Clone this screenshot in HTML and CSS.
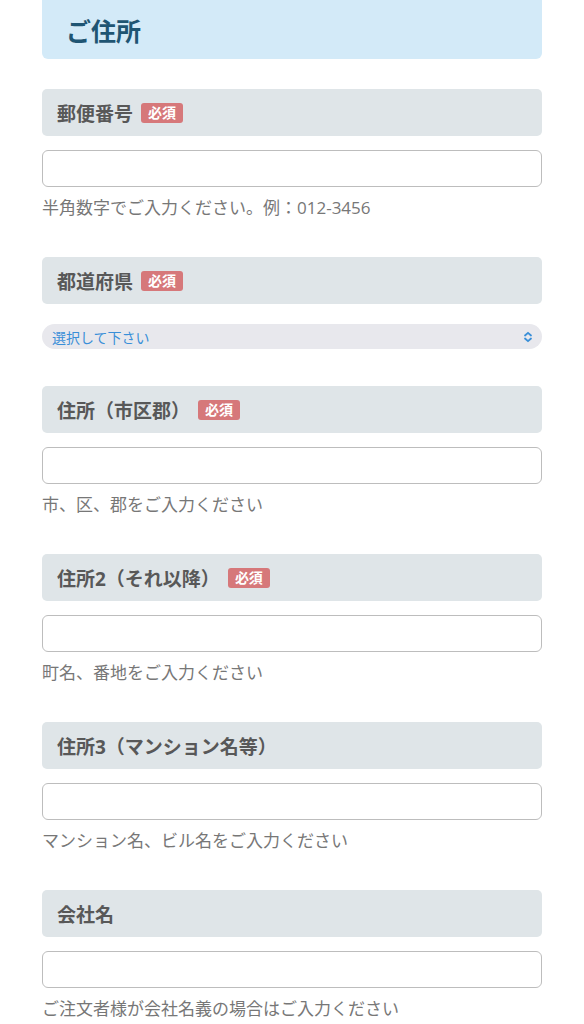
FILE: index.html
```html
<!DOCTYPE html>
<html lang="ja">
<head>
  <meta charset="UTF-8" />
  <meta name="viewport" content="width=device-width, initial-scale=1.0" />
  <title>ご住所</title>
  <link rel="stylesheet" href="styles.css">
</head>
<body>
  <form class="form">
    <h2 class="section-title">ご住所</h2>

    <div class="field">
      <div class="field-label">郵便番号<span class="required">必須</span></div>
      <input type="text" class="text-input" />
      <p class="help">半角数字でご入力ください。例：012-3456</p>
    </div>

    <div class="field">
      <div class="field-label">都道府県<span class="required">必須</span></div>
      <div class="select">
        <span>選択して下さい</span>
        <svg class="select-icon" width="10" height="12" viewBox="0 0 10 12">
          <path d="M2 4.5 L5 1.8 L8 4.5 M2 7.5 L5 10.2 L8 7.5" fill="none" stroke="#3a8fd8" stroke-width="1.8" stroke-linecap="round" stroke-linejoin="round"/>
        </svg>
      </div>
    </div>

    <div class="field">
      <div class="field-label">住所（市区郡）<span class="required">必須</span></div>
      <input type="text" class="text-input" />
      <p class="help">市、区、郡をご入力ください</p>
    </div>

    <div class="field">
      <div class="field-label">住所2（それ以降）<span class="required">必須</span></div>
      <input type="text" class="text-input" />
      <p class="help">町名、番地をご入力ください</p>
    </div>

    <div class="field">
      <div class="field-label">住所3（マンション名等）</div>
      <input type="text" class="text-input" />
      <p class="help">マンション名、ビル名をご入力ください</p>
    </div>

    <div class="field">
      <div class="field-label">会社名</div>
      <input type="text" class="text-input" />
      <p class="help">ご注文者様が会社名義の場合はご入力ください</p>
    </div>
  </form>
</body>
</html>
```

FILE: styles.css
```css
body {
  font-family: "Open Sans", "Noto Sans CJK JP", sans-serif;
  margin: 0;
  padding: 0;
  background-color: #fff;
}
.form {
  padding: 0 42px;
}
.section-title {
  margin: 0;
  height: 59px;
  display: flex;
  align-items: center;
  padding-left: 24px;
  background-color: #d3eaf8;
  border-radius: 0 0 6px 6px;
  color: #1f5573;
  font-size: 25px;
  font-weight: bold;
  margin-bottom: 30px;
}
.field {
  margin-bottom: 37px;
}
.field-label {
  height: 47px;
  display: flex;
  align-items: center;
  padding-left: 15px;
  background-color: #dfe5e8;
  border-radius: 5px;
  color: #585858;
  font-size: 19px;
  font-weight: bold;
  margin-bottom: 14px;
}
.required {
  display: inline-block;
  margin-left: 8px;
  padding: 0 7px;
  height: 20px;
  line-height: 20px;
  background-color: #d6787a;
  color: #fff;
  font-size: 14px;
  font-weight: bold;
  border-radius: 3px;
}
.text-input {
  display: block;
  box-sizing: border-box;
  width: 100%;
  height: 37px;
  border: 1.5px solid #bdbdbd;
  border-radius: 6px;
  background: #fff;
  margin: 0;
}
.help {
  margin: 9px 0 0;
  line-height: 24px;
  font-size: 17px;
  color: #777;
}
.select {
  margin-top: 20px;
  height: 25px;
  display: flex;
  align-items: center;
  justify-content: space-between;
  padding: 0 9px 0 10px;
  background-color: #e8e8ed;
  border-radius: 13px;
  color: #3a8fd8;
  font-size: 14px;
}
```
